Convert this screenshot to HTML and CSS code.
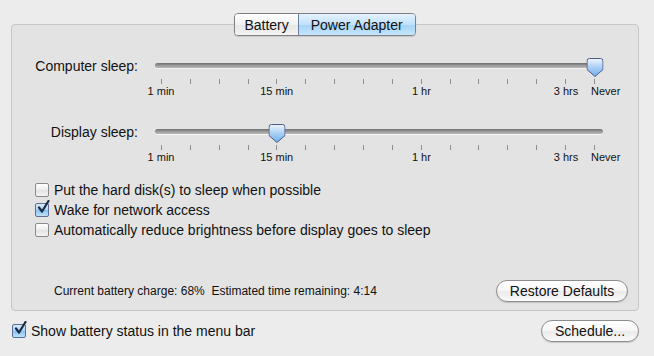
FILE: index.html
```html
<!DOCTYPE html>
<html lang="en">
<head>
    <meta charset="UTF-8">
    <title>Energy Saver</title>
    <link rel="stylesheet" href="styles.css">
</head>
<body>
    <div class="window">
        <div class="group">
            <div class="tabs">
                <span class="tab">Battery</span>
                <span class="tab active">Power Adapter</span>
            </div>

            <div class="slider-row first">
                <label class="slider-label">Computer sleep:</label>
                <div class="slider">
                    <div class="track-area">
                        <div class="track"></div>
                        <svg class="thumb" style="left: 100%" width="17" height="19" viewBox="0 0 17 19">
                            <defs>
                                <linearGradient id="tg1" x1="0" y1="0" x2="0" y2="1">
                                    <stop offset="0" stop-color="#eef5fd"/>
                                    <stop offset="0.5" stop-color="#a9cff5"/>
                                    <stop offset="1" stop-color="#6fb0ee"/>
                                </linearGradient>
                            </defs>
                            <path d="M3 0.5 H14 Q16.5 0.5 16.5 3 V11.5 L8.5 18.5 L0.5 11.5 V3 Q0.5 0.5 3 0.5 Z" fill="url(#tg1)" stroke="#4d5c88"/>
                        </svg>
                    </div>
                    <div class="ticks">
                        <i></i><i></i><i></i><i></i><i></i><i></i><i></i><i></i>
                        <i></i><i></i><i></i><i></i><i></i><i></i><i></i><i></i>
                    </div>
                    <div class="marks">
                        <span style="left: 0%">1 min</span>
                        <span style="left: 26.667%">15 min</span>
                        <span style="left: 60%">1 hr</span>
                        <span style="left: 93.333%">3 hrs</span>
                        <span class="end" style="left: 100%">Never</span>
                    </div>
                </div>
            </div>

            <div class="slider-row second">
                <label class="slider-label">Display sleep:</label>
                <div class="slider">
                    <div class="track-area">
                        <div class="track"></div>
                        <svg class="thumb" style="left: 26.667%" width="17" height="19" viewBox="0 0 17 19">
                            <defs>
                                <linearGradient id="tg2" x1="0" y1="0" x2="0" y2="1">
                                    <stop offset="0" stop-color="#eef5fd"/>
                                    <stop offset="0.5" stop-color="#a9cff5"/>
                                    <stop offset="1" stop-color="#6fb0ee"/>
                                </linearGradient>
                            </defs>
                            <path d="M3 0.5 H14 Q16.5 0.5 16.5 3 V11.5 L8.5 18.5 L0.5 11.5 V3 Q0.5 0.5 3 0.5 Z" fill="url(#tg2)" stroke="#4d5c88"/>
                        </svg>
                    </div>
                    <div class="ticks">
                        <i></i><i></i><i></i><i></i><i></i><i></i><i></i><i></i>
                        <i></i><i></i><i></i><i></i><i></i><i></i><i></i><i></i>
                    </div>
                    <div class="marks">
                        <span style="left: 0%">1 min</span>
                        <span style="left: 26.667%">15 min</span>
                        <span style="left: 60%">1 hr</span>
                        <span style="left: 93.333%">3 hrs</span>
                        <span class="end" style="left: 100%">Never</span>
                    </div>
                </div>
            </div>

            <div class="options">
                <div class="check-row"><span class="box"></span>Put the hard disk(s) to sleep when possible</div>
                <div class="check-row"><span class="box checked"><svg width="15" height="15" viewBox="0 0 15 15"><path d="M3 7.5 L6 11.5 L12.5 1" fill="none" stroke="#1c2a44" stroke-width="2.2" stroke-linecap="round" stroke-linejoin="round"/></svg></span>Wake for network access</div>
                <div class="check-row"><span class="box"></span>Automatically reduce brightness before display goes to sleep</div>
            </div>

            <div class="group-footer">
                <span class="status">Current battery charge: 68%&nbsp;&nbsp;Estimated time remaining: 4:14</span>
                <button class="btn restore">Restore Defaults</button>
            </div>
        </div>

        <div class="bottom">
            <div class="check-row"><span class="box checked"><svg width="15" height="15" viewBox="0 0 15 15"><path d="M3 7.5 L6 11.5 L12.5 1" fill="none" stroke="#1c2a44" stroke-width="2.2" stroke-linecap="round" stroke-linejoin="round"/></svg></span>Show battery status in the menu bar</div>
            <button class="btn schedule">Schedule...</button>
        </div>
    </div>
</body>
</html>
```

FILE: styles.css
```css
body { margin: 0; background: #ececec; font-family: "Liberation Sans", Arial, sans-serif; font-size: 14px; color: #111; }
.window { width: 654px; height: 356px; padding-top: 24px; box-sizing: border-box; }

.group { margin-left: 11px; width: 628px; height: 287px; box-sizing: border-box; background: #e3e3e3; border: 1px solid #c6c6c6; border-radius: 4px; display: flex; flex-direction: column; }

.tabs { align-self: center; display: flex; margin-top: -12px; height: 21px; border: 1px solid #7f7f85; border-radius: 4px; overflow: hidden; box-shadow: 0 1px 1px rgba(0,0,0,0.12); }
.tab { display: flex; align-items: center; padding: 0 9px; background: linear-gradient(#ffffff, #f1f1f1 50%, #e6e6e6 51%, #f3f3f3); }
.tab + .tab { border-left: 1px solid #9a9a9a; }
.tab.active { padding: 0 12px; background: linear-gradient(#e4f2fd, #c2e1fa 50%, #a5d3f6 51%, #c5e6fb); border-left-color: #6a7fa3; }

.slider-row { display: grid; grid-template-columns: 126px 1fr; }
.slider-row.first { margin-top: 20px; }
.slider-row.second { margin-top: 24px; }
.slider-label { text-align: right; line-height: 20px; }
.slider { position: relative; width: 434px; margin-left: 23px; }
.track-area { position: relative; height: 20px; }
.track { position: absolute; left: -6px; right: -8px; top: 7px; height: 5px; border-radius: 3px; background: linear-gradient(#6e6e6e, #9a9a9a 50%, #b9b9b9); box-shadow: 0 1px 0 rgba(255,255,255,0.6); }
.thumb { position: absolute; top: 2px; transform: translateX(-50%); }

.ticks { display: flex; justify-content: space-between; margin-top: 3px; height: 5px; }
.ticks i { display: block; width: 1px; height: 5px; background: #8e8e8e; }
.marks { position: relative; height: 13px; margin-top: 1px; font-size: 11px; line-height: 13px; }
.marks span { position: absolute; top: 0; transform: translateX(-50%); white-space: nowrap; }
.marks span.end { transform: translateX(-4px); }

.options { margin-top: 16px; padding-left: 23px; }
.check-row { display: flex; align-items: center; height: 20px; }
.box { width: 12px; height: 12px; margin-right: 5px; border: 1px solid #8a8a8a; border-radius: 2px; background: linear-gradient(#ffffff, #ececec 50%, #e2e2e2 51%, #f4f4f4); position: relative; flex: none; }
.box.checked { border-color: #5a6f93; background: linear-gradient(#d9ecfc, #a9d2f5 50%, #86c0f0 51%, #bfe1fa); }
.box svg { position: absolute; left: 0; top: -4px; }

.group-footer { margin-top: auto; margin-bottom: 8px; display: flex; justify-content: space-between; align-items: center; padding-left: 42px; padding-right: 10px; }
.status { font-size: 12px; }

.btn { font-family: inherit; font-size: 14px; color: #111; height: 22px; padding: 0 10px; border: 1px solid #8d8d8d; border-radius: 11px; background: linear-gradient(#ffffff, #f6f6f6 50%, #eaeaea 51%, #fafafa); box-shadow: 0 1px 1px rgba(0,0,0,0.15); }
.btn.restore { width: 132px; }
.btn.schedule { width: 98px; }

.bottom { display: flex; justify-content: space-between; align-items: center; margin-top: 9px; padding-left: 12px; padding-right: 15px; }
.bottom .box { margin-right: 5px; }
```
